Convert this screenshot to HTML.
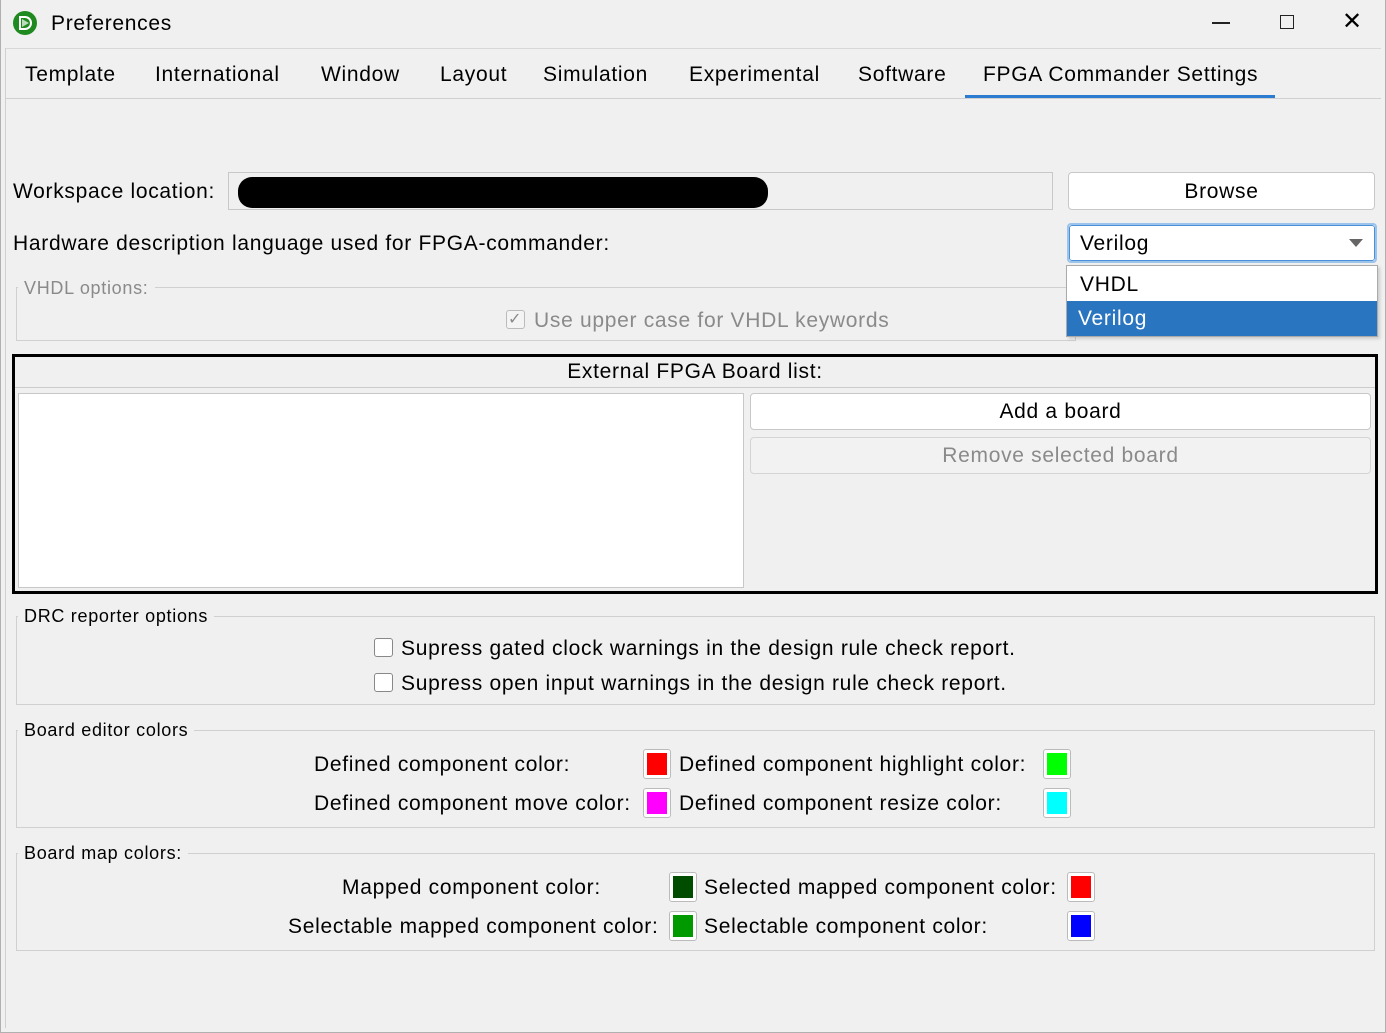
<!DOCTYPE html>
<html><head><style>
body{margin:0;width:1386px;height:1033px;background:#f0f0f0;font-family:"Liberation Sans",sans-serif;color:#000;position:relative;overflow:hidden}
.t{position:absolute;font-size:21px;line-height:24px;white-space:nowrap;letter-spacing:0.7px;margin-top:1px}
.g{color:#8a8a8a}
.b{position:absolute;box-sizing:border-box}
.sw{position:absolute;width:28px;height:30px;box-sizing:border-box;border:1px solid #bbb;border-radius:3px;background:#fff;padding:3px}
.sw div{width:100%;height:100%}
.cb{position:absolute;width:19px;height:19px;box-sizing:border-box;border:1px solid #888;border-radius:3px;background:#fff}
.grp{position:absolute;border:1px solid #d0d0d0;box-sizing:border-box}
.lg{position:absolute;background:#f0f0f0;padding:0 6px;font-size:18px;line-height:22px;letter-spacing:0.7px;margin-top:1px}
</style></head><body>
<div class="b" style="left:0;top:0;width:1386px;height:1033px;border:1px solid #b0b0b0;border-top:none"></div>
<svg style="position:absolute;left:12px;top:10px" width="26" height="26" viewBox="0 0 26 26"><circle cx="13" cy="13" r="12" fill="#1f8a1f"/><path d="M8 7h5a6 6 0 0 1 0 12H8z" fill="none" stroke="#fff" stroke-width="2"/><path d="M10 9l7 4-7 4z" fill="#fff" opacity=".7"/></svg>
<div class="t" style="left:51px;top:11px">Preferences</div>
<div class="b" style="left:1212px;top:22px;width:18px;height:1.5px;background:#222"></div>
<div class="b" style="left:1280px;top:15px;width:14px;height:14px;border:1.5px solid #222"></div>
<div class="t" style="left:1342px;top:9px;font-size:24px">&#10005;</div>
<div class="b" style="left:5px;top:48px;width:1376px;height:1px;background:#d8d8d8"></div>
<div class="b" style="left:5px;top:98px;width:1376px;height:1px;background:#d0d0d0"></div>
<div class="b" style="left:5px;top:48px;width:1px;height:980px;background:#d0d0d0"></div>
<div class="t" style="left:25px;top:62px">Template</div>
<div class="t" style="left:155px;top:62px">International</div>
<div class="t" style="left:321px;top:62px">Window</div>
<div class="t" style="left:440px;top:62px">Layout</div>
<div class="t" style="left:543px;top:62px">Simulation</div>
<div class="t" style="left:689px;top:62px">Experimental</div>
<div class="t" style="left:858px;top:62px">Software</div>
<div class="t" style="left:983px;top:62px">FPGA Commander Settings</div>
<div class="b" style="left:965px;top:95px;width:310px;height:3px;background:#2b7bd0"></div>
<div class="t" style="left:13px;top:179px">Workspace location:</div>
<div class="b" style="left:228px;top:172px;width:825px;height:38px;border:1px solid #c8c8c8;background:#f0f0f0"></div>
<div class="b" style="left:238px;top:177px;width:530px;height:31px;background:#000;border-radius:14px"></div>
<div class="b" style="left:1068px;top:172px;width:307px;height:38px;border:1px solid #c8c8c8;border-radius:4px;background:#fff"></div>
<div class="t" style="left:1068px;top:179px;width:307px;text-align:center">Browse</div>
<div class="t" style="left:13px;top:231px">Hardware description language used for FPGA-commander:</div>
<div class="b" style="left:1067px;top:223px;width:310px;height:40px;border:2px solid #9cc3ea;border-radius:4px;background:#fff"></div>
<div class="b" style="left:1069px;top:225px;width:306px;height:36px;border:1px solid #4a90d9;border-radius:3px"></div>
<div class="t" style="left:1080px;top:231px">Verilog</div>
<svg style="position:absolute;left:1349px;top:239px" width="14" height="8"><path d="M0 0h14L7 8z" fill="#666"/></svg>
<div class="grp" style="left:16px;top:287px;width:1060px;height:54px"></div>
<div class="lg g" style="left:18px;top:276px">VHDL options:</div>
<div class="cb" style="left:506px;top:310px;border-color:#bbb;background:#f4f4f4"></div>
<div class="t g" style="left:508px;top:307px;font-size:16px">&#10003;</div>
<div class="t g" style="left:534px;top:308px">Use upper case for VHDL keywords</div>
<div class="b" style="left:1066px;top:265px;width:312px;height:72px;border:1px solid #aaa;background:#fff;box-shadow:2px 2px 3px rgba(0,0,0,.15)"></div>
<div class="t" style="left:1080px;top:272px">VHDL</div>
<div class="b" style="left:1067px;top:301px;width:310px;height:35px;background:#2a75c0"></div>
<div class="t" style="left:1078px;top:306px;color:#fff">Verilog</div>
<div class="b" style="left:12px;top:354px;width:1366px;height:240px;border:3px solid #000"></div>
<div class="t" style="left:12px;top:359px;width:1366px;text-align:center">External FPGA Board list:</div>
<div class="b" style="left:15px;top:387px;width:1360px;height:1px;background:#ccc"></div>
<div class="b" style="left:18px;top:393px;width:726px;height:195px;border:1px solid #c8c8c8;background:#fff"></div>
<div class="b" style="left:750px;top:393px;width:621px;height:37px;border:1px solid #c8c8c8;border-radius:4px;background:#fff"></div>
<div class="t" style="left:750px;top:399px;width:621px;text-align:center">Add a board</div>
<div class="b" style="left:750px;top:437px;width:621px;height:37px;border:1px solid #d4d4d4;border-radius:4px;background:#f2f2f2"></div>
<div class="t g" style="left:750px;top:443px;width:621px;text-align:center">Remove selected board</div>
<div class="grp" style="left:16px;top:616px;width:1359px;height:89px"></div>
<div class="lg" style="left:18px;top:604px">DRC reporter options</div>
<div class="cb" style="left:374px;top:638px"></div>
<div class="t" style="left:401px;top:636px">Supress gated clock warnings in the design rule check report.</div>
<div class="cb" style="left:374px;top:673px"></div>
<div class="t" style="left:401px;top:671px">Supress open input warnings in the design rule check report.</div>
<div class="grp" style="left:16px;top:730px;width:1359px;height:98px"></div>
<div class="lg" style="left:18px;top:718px">Board editor colors</div>
<div class="t" style="left:314px;top:752px">Defined component color:</div>
<div class="sw" style="left:643px;top:749px"><div style="background:#f00"></div></div>
<div class="t" style="left:679px;top:752px">Defined component highlight color:</div>
<div class="sw" style="left:1043px;top:749px"><div style="background:#0f0"></div></div>
<div class="t" style="left:314px;top:791px">Defined component move color:</div>
<div class="sw" style="left:643px;top:788px"><div style="background:#f0f"></div></div>
<div class="t" style="left:679px;top:791px">Defined component resize color:</div>
<div class="sw" style="left:1043px;top:788px"><div style="background:#0ff"></div></div>
<div class="grp" style="left:16px;top:853px;width:1359px;height:98px"></div>
<div class="lg" style="left:18px;top:841px">Board map colors:</div>
<div class="t" style="left:342px;top:875px">Mapped component color:</div>
<div class="sw" style="left:669px;top:872px"><div style="background:#004d00"></div></div>
<div class="t" style="left:704px;top:875px">Selected mapped component color:</div>
<div class="sw" style="left:1067px;top:872px"><div style="background:#f00"></div></div>
<div class="t" style="left:288px;top:914px">Selectable mapped component color:</div>
<div class="sw" style="left:669px;top:911px"><div style="background:#009900"></div></div>
<div class="t" style="left:704px;top:914px">Selectable component color:</div>
<div class="sw" style="left:1067px;top:911px"><div style="background:#00f"></div></div>
</body></html>
